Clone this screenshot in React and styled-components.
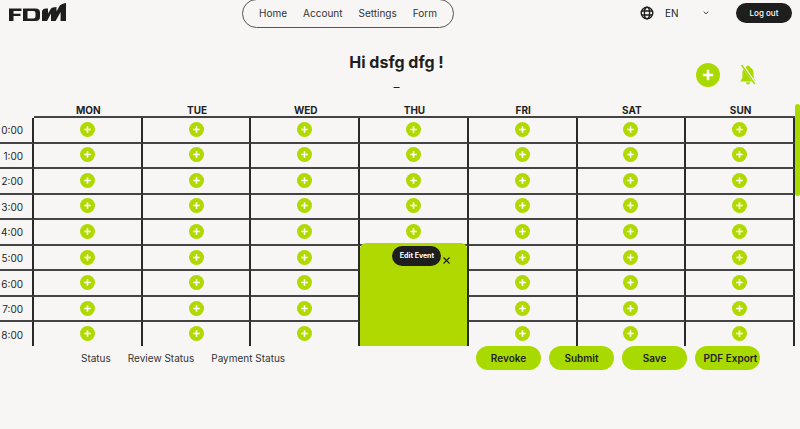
import React from 'react';
import styled, { createGlobalStyle } from 'styled-components';

const ink = '#1e1e1e';
const lime = '#afd900';
const green = '#a9da00';
const paper = '#f7f6f5';

const GlobalStyle = createGlobalStyle`
  *, *::before, *::after { box-sizing: border-box; }
  body { margin: 0; background: ${paper}; color: ${ink}; font-family: Inter, sans-serif; }
  button, select { font-family: inherit; color: inherit; }
  button { cursor: pointer; border: 0; padding: 0; }
  a { color: inherit; text-decoration: none; }
`;

const Page = styled.div`
  min-height: 100vh;
  overflow: hidden;
`;

const Header = styled.header`
  display: flex;
  justify-content: space-between;
  align-items: flex-start;
  padding: 0 8px;
`;

const LogoLink = styled.a`
  display: block;
  margin-top: 3px;
  svg { display: block; }
`;

const Nav = styled.nav`
  display: flex;
  align-items: center;
  gap: 16px;
  height: 29px;
  margin-top: -1px;
  padding: 0 16px 1px;
  border: 1px solid #555;
  border-radius: 15px;
  font-size: 10px;
  color: #333;
`;

const Account = styled.div`
  display: flex;
  align-items: center;
  height: 26px;
  padding-left: 11px;
`;

const LanguageLabel = styled.label`
  display: flex;
  align-items: center;
  position: relative;
  width: 96px;
  svg:last-child { position: absolute; right: 27px; pointer-events: none; }
`;

const LanguageSelect = styled.select`
  appearance: none;
  width: 60px;
  margin-left: 11px;
  padding: 0;
  border: 0;
  background: transparent;
  font-size: 10px;
`;

const DarkButton = styled.button`
  background: ${ink};
  color: #fff;
  border-radius: 10px;
`;

const LogoutButton = styled(DarkButton)`
  width: 56px;
  height: 20px;
  font-size: 8px;
  font-weight: 500;
`;

const Greeting = styled.section`
  position: relative;
  display: flex;
  flex-direction: column;
  align-items: center;
  height: 76px;
  padding: 24px 7px 0 0;
`;

const Title = styled.h1`
  margin: 0;
  font-size: 16px;
  line-height: 20px;
  font-weight: 700;
`;

const Period = styled.p`
  margin: 7px 0 0;
  font-size: 12px;
  line-height: 16px;
`;

const Tools = styled.div`
  position: absolute;
  top: 35px;
  right: 43px;
  display: flex;
  align-items: center;
  gap: 19px;
`;

const IconButton = styled.button`
  display: grid;
  place-items: center;
  background: transparent;
  svg { display: block; }
`;

const Calendar = styled.div`
  position: relative;
  height: 242px;
  padding-right: 5px;
  overflow: hidden;
`;

const ScrollThumb = styled.div`
  position: absolute;
  top: 0;
  right: 0;
  width: 5px;
  height: 92px;
  border-radius: 3px;
  background: ${green};
`;

const Schedule = styled.table`
  width: 100%;
  height: 244px;
  table-layout: fixed;
  border-collapse: separate;
  border-spacing: 0;
`;

const DayHeading = styled.th`
  height: 14px;
  padding: 0;
  border-bottom: 2px solid #444;
  font-size: 10px;
  line-height: 12px;
  font-weight: 700;
`;

const Corner = styled.td`
  width: 34px;
  padding: 0;
  border: 0;
`;

const Hour = styled.th`
  padding: 1px 9px 0 0;
  border-right: 2px solid #2a2a2a;
  border-bottom: 2px solid #444;
  font-size: 10px;
  line-height: 12px;
  font-weight: 400;
  text-align: right;
`;

const Slot = styled.td`
  padding: 0 0 1px;
  border-right: 2px solid #2a2a2a;
  border-bottom: 2px solid #444;
  text-align: center;
  ${IconButton} { margin: 0 auto; }
`;

const EventSlot = styled.td`
  position: relative;
  padding: 0;
  border-right: 2px solid #2a2a2a;
`;

const EventCard = styled.div`
  position: absolute;
  inset: -3px 0 0;
  display: flex;
  justify-content: center;
  align-items: flex-start;
  padding-top: 3px;
  border-radius: 6px 6px 0 0;
  background: ${lime};
`;

const EditButton = styled(DarkButton)`
  width: 49px;
  height: 20px;
  margin-left: 17px;
  font-size: 7px;
  font-weight: 700;
  white-space: nowrap;
`;

const CloseButton = styled(IconButton)`
  width: 10px;
  height: 10px;
  margin-top: 10px;
`;

const Footer = styled.footer`
  display: flex;
  justify-content: space-between;
  align-items: center;
  padding: 0 40px 0 81px;
`;

const StatusList = styled.div`
  display: flex;
  gap: 17px;
  font-size: 10px;
  color: #333;
`;

const Actions = styled.div`
  display: flex;
  gap: 8px;
`;

const ActionButton = styled.button`
  width: 65px;
  height: 24px;
  padding-left: ${({ $wide }) => ($wide ? '6px' : '0')};
  border-radius: 12px;
  background: ${green};
  font-size: 10px;
  font-weight: 600;
  white-space: nowrap;
`;

const Logo = () => (
  <svg width="59" height="19" viewBox="0 0 59 19" fill={ink} aria-hidden="true">
    <path d="M1 5.5H13.5V8H5.5V10.7H12.5V13H5.5V18H1ZM15 5.5H27.5Q32 5.5 32 9.5V14Q32 18 27.5 18H15ZM19.5 8V15.5H25.5Q27.5 15.5 27.5 13.5V10Q27.5 8 25.5 8Z" fillRule="evenodd" />
    <path d="M34 18V9Q34 5.5 38 5.5H40V10.5L43 5.5Q44 4.4 48.5 4V8.5L51.5 3Q53 .8 58 0V18H52.6V9L47.6 18H43V10.5L39 18Z" />
  </svg>
);

const Globe = () => (
  <svg width="14" height="14" viewBox="0 0 14 14" fill="none" stroke={ink} strokeWidth="1.4" aria-hidden="true">
    <circle cx="7" cy="7" r="5.8" />
    <ellipse cx="7" cy="7" rx="2.6" ry="5.8" />
    <path d="M1.8 5H12.2M1.8 9H12.2" />
  </svg>
);

const Chevron = () => (
  <svg width="6" height="4" viewBox="0 0 6 4" fill="none" stroke={ink} strokeWidth="0.9" aria-hidden="true">
    <path d="M0.8 0.7L3 2.9L5.2 0.7" />
  </svg>
);

const Plus = ({ size, color = lime }) => (
  <svg width={size} height={size} viewBox="0 0 24 24" aria-hidden="true">
    <circle cx="12" cy="12" r="12" fill={color} />
    <path d="M12 6.8V17.2M6.8 12H17.2" stroke="#fff" strokeWidth="2.5" />
  </svg>
);

const BellOff = () => (
  <svg width="18" height="22" viewBox="0 0 18 22" aria-hidden="true">
    <path d="M9 1.5Q10.8 1.5 10.8 3.2Q14.6 4.6 14.6 9V14L16.8 17.5H1.2L3.4 14V9Q3.4 4.6 7.2 3.2Q7.2 1.5 9 1.5ZM7 18.2H11Q11 20.5 9 20.5Q7 20.5 7 18.2Z" fill={green} />
    <path d="M3.2 .9L16.2 19.7" stroke={paper} strokeWidth="2.8" />
    <path d="M2.6 1L15.8 20" stroke={green} strokeWidth="1.5" />
  </svg>
);

const Cross = () => (
  <svg width="7" height="7" viewBox="0 0 7 7" stroke={ink} strokeWidth="1.1" aria-hidden="true">
    <path d="M.5 .5L6.5 6.5M6.5 .5L.5 6.5" />
  </svg>
);

const days = ['MON', 'TUE', 'WED', 'THU', 'FRI', 'SAT', 'SUN'];
const hours = [0, 1, 2, 3, 4, 5, 6, 7, 8];
const event = { day: 'THU', start: 5 };

export default function App() {
  return (
    <Page>
      <GlobalStyle />
      <Header>
        <LogoLink href="#" aria-label="FDM"><Logo /></LogoLink>
        <Nav>
          {['Home', 'Account', 'Settings', 'Form'].map((item) => (
            <a key={item} href={`#${item.toLowerCase()}`}>{item}</a>
          ))}
        </Nav>
        <Account>
          <LanguageLabel>
            <Globe />
            <LanguageSelect aria-label="Language"><option>EN</option></LanguageSelect>
            <Chevron />
          </LanguageLabel>
          <LogoutButton>Log out</LogoutButton>
        </Account>
      </Header>
      <Greeting>
        <Title>Hi dsfg dfg !</Title>
        <Period>–</Period>
        <Tools>
          <IconButton aria-label="Add event"><Plus size={24} color={green} /></IconButton>
          <IconButton aria-label="Notifications off"><BellOff /></IconButton>
        </Tools>
      </Greeting>
      <Calendar>
        <Schedule>
          <thead>
            <tr>
              <Corner />
              {days.map((day) => <DayHeading key={day} scope="col">{day}</DayHeading>)}
            </tr>
          </thead>
          <tbody>
            {hours.map((hour) => (
              <tr key={hour}>
                <Hour scope="row">{hour}:00</Hour>
                {days.map((day) => {
                  if (day === event.day && hour === event.start) {
                    return (
                      <EventSlot key={day} rowSpan={hours.length - event.start}>
                        <EventCard>
                          <EditButton>Edit Event</EditButton>
                          <CloseButton aria-label="Remove event"><Cross /></CloseButton>
                        </EventCard>
                      </EventSlot>
                    );
                  }
                  if (day === event.day && hour > event.start) return null;
                  return (
                    <Slot key={day}>
                      <IconButton aria-label={`Add on ${day} at ${hour}:00`}><Plus size={15} /></IconButton>
                    </Slot>
                  );
                })}
              </tr>
            ))}
          </tbody>
        </Schedule>
        <ScrollThumb />
      </Calendar>
      <Footer>
        <StatusList>
          <span>Status</span>
          <span>Review Status</span>
          <span>Payment Status</span>
        </StatusList>
        <Actions>
          <ActionButton>Revoke</ActionButton>
          <ActionButton>Submit</ActionButton>
          <ActionButton>Save</ActionButton>
          <ActionButton $wide>PDF Export</ActionButton>
        </Actions>
      </Footer>
    </Page>
  );
}
